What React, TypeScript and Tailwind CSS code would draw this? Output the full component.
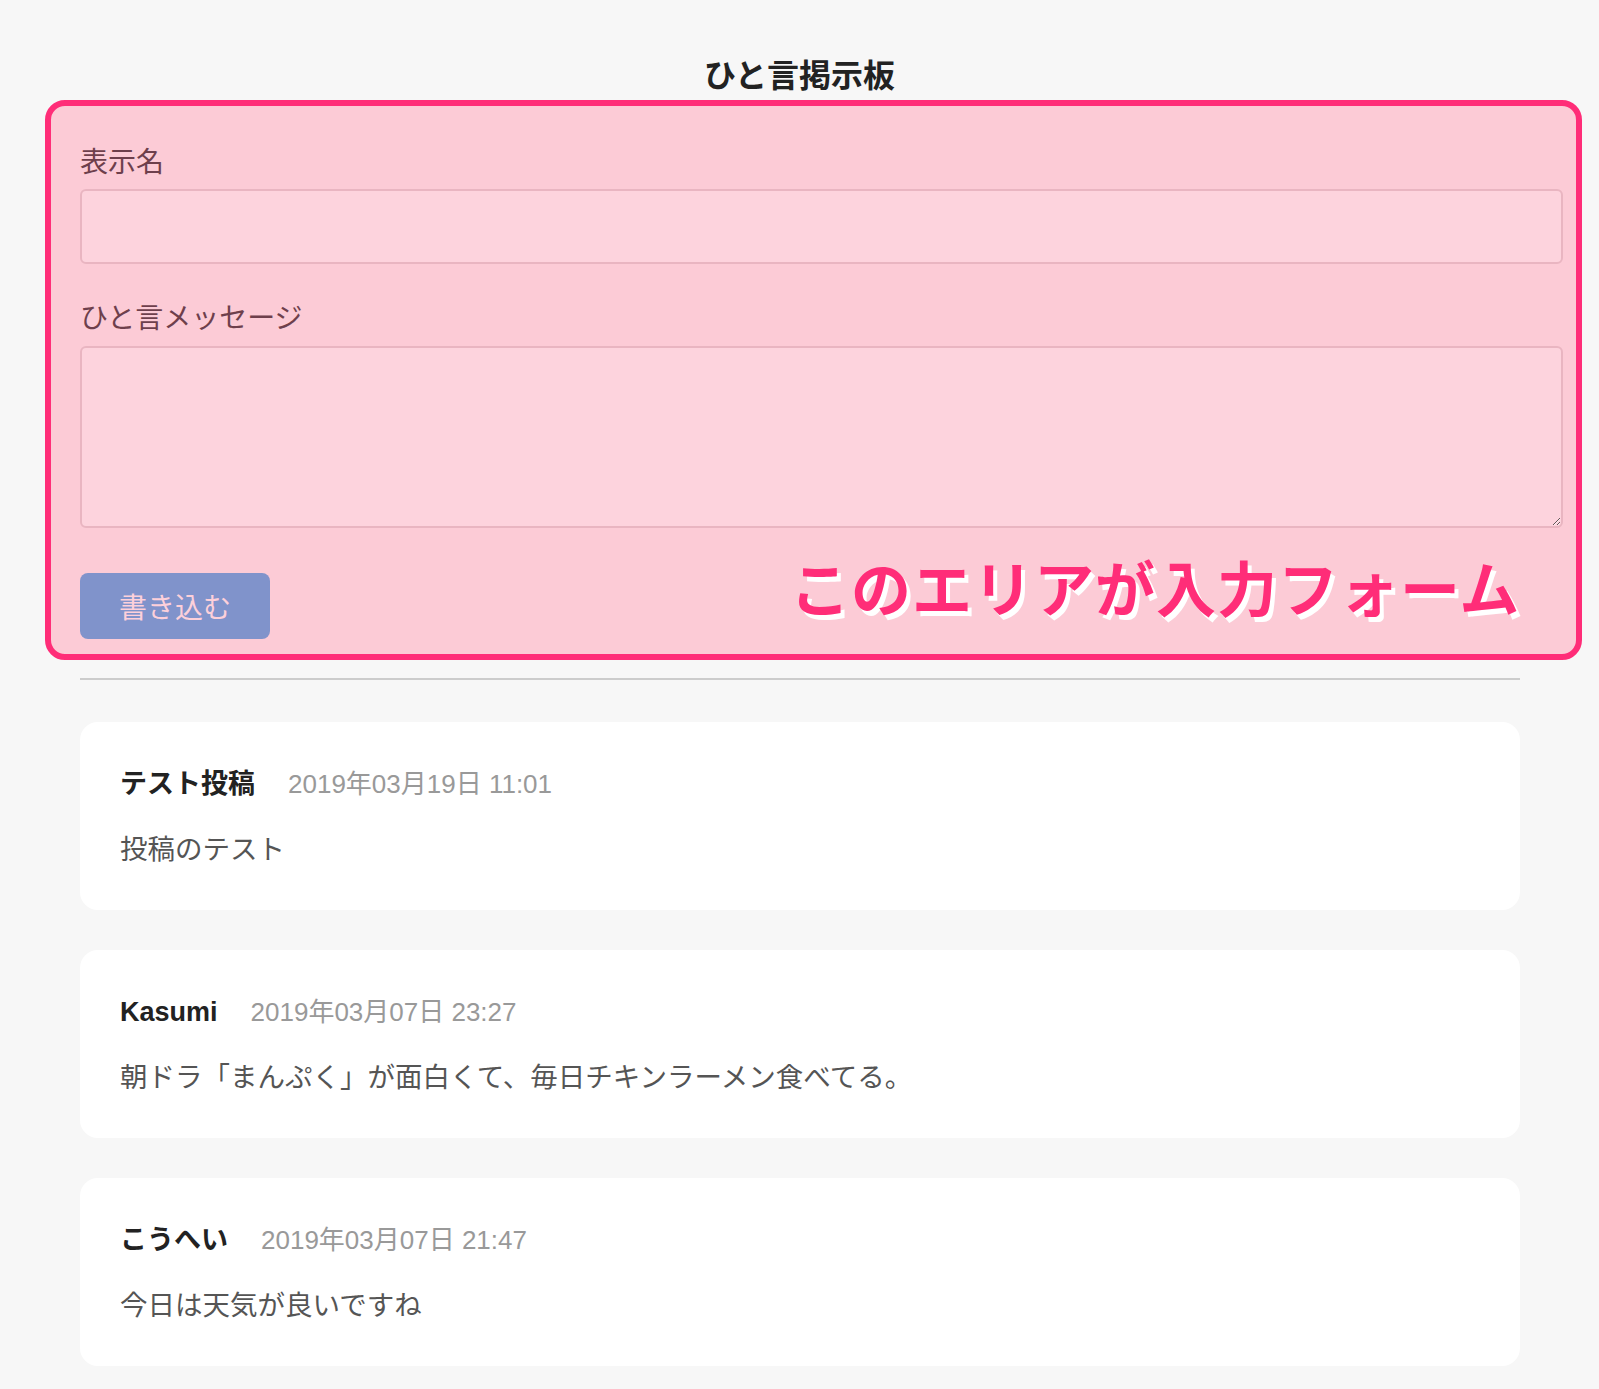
const posts = [
  { name: "テスト投稿", date: "2019年03月19日 11:01", body: "投稿のテスト" },
  { name: "Kasumi", date: "2019年03月07日 23:27", body: "朝ドラ「まんぷく」が面白くて、毎日チキンラーメン食べてる。" },
  { name: "こうへい", date: "2019年03月07日 21:47", body: "今日は天気が良いですね" },
];

const latin = { fontFamily: '"Liberation Sans", "Noto Sans CJK JP", sans-serif' };

export default function App() {
  return (
    <div
      className="min-h-screen bg-[#f7f7f7] pt-[53px] pb-[22px]"
      style={{ fontFamily: '"Noto Sans CJK JP", "Noto Sans", sans-serif' }}
    >
      <h1 className="text-center text-[32px] leading-[40px] font-bold text-[#222]">ひと言掲示板</h1>

      <form className="relative mt-[7px] ml-[45px] w-[1537px] rounded-[20px] border-[6px] border-[#ff2d78] bg-[#fccbd6] pl-[29px] pr-[13px] pt-[34px] pb-[15px]">
        <label className="block text-[28px] leading-[40px] text-[#6e3f4c]">表示名</label>
        <input
          type="text"
          className="mt-[9px] block h-[75px] w-full rounded-[6px] border-2 border-[#e9b5c1] bg-[#fdd3dd] px-4 text-[27px] outline-none"
        />
        <label className="mt-[32px] block text-[28px] leading-[40px] text-[#6e3f4c]">ひと言メッセージ</label>
        <textarea className="mt-[10px] block h-[182px] w-full rounded-[6px] border-2 border-[#e9b5c1] bg-[#fdd3dd] px-4 py-2 text-[27px] outline-none" />
        <button
          type="button"
          className="mt-[45px] block h-[66px] w-[190px] rounded-[8px] bg-[#8093cb] text-[28px] text-[#fdd0da]"
        >
          書き込む
        </button>
        <div className="absolute left-[739px] top-[450px] text-[60px] leading-none font-bold tracking-[1px] text-[#ff2d78] [text-shadow:4px_5px_0_#ffffff]">
          このエリアが入力フォーム
        </div>
      </form>

      <div className="mt-[18px] ml-[80px] h-[2px] w-[1440px] bg-[#cccccc]" />

      <div className="mt-[42px] ml-[80px] flex w-[1440px] flex-col gap-[40px]">
        {posts.map((p) => (
          <div key={p.date} className="rounded-[18px] bg-white pl-[40px] pt-[40px] pb-[43px]">
            <div className="flex items-baseline leading-[44px]">
              <span className="text-[27px] font-bold text-[#222]" style={latin}>
                {p.name}
              </span>
              <span className="ml-[33px] text-[26px] text-[#999]" style={latin}>
                {p.date}
              </span>
            </div>
            <p className="mt-[21px] text-[27.5px] leading-[40px] text-[#555]">{p.body}</p>
          </div>
        ))}
      </div>
    </div>
  );
}
